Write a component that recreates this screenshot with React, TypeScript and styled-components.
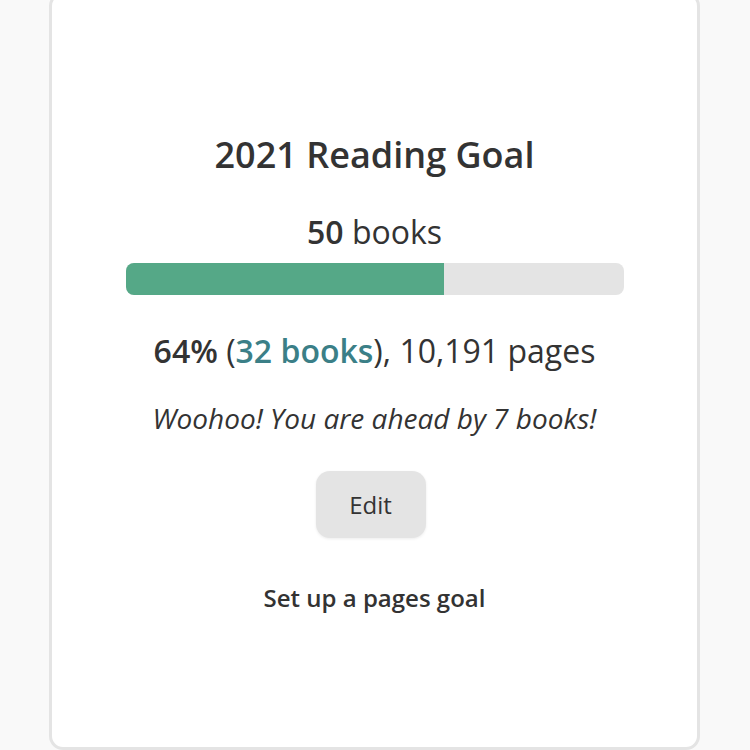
import React from 'react'
import styled, { createGlobalStyle } from 'styled-components'

const GlobalStyle = createGlobalStyle`
  html, body {
    margin: 0;
    padding: 0;
    background: #f9f9f9;
    font-family: "Open Sans", "Noto Sans", sans-serif;
    color: #333;
  }
`

const Page = styled.div`
  width: 750px;
  height: 750px;
  overflow: hidden;
  display: flex;
  justify-content: center;
`

const Card = styled.section`
  box-sizing: border-box;
  width: 651px;
  height: 758px;
  margin: -8px 0 0 -1px;
  background: #fff;
  border: 3px solid #e4e4e4;
  border-radius: 14px;
  display: flex;
  flex-direction: column;
  align-items: center;
  padding-top: 139px;
`

const Title = styled.h2`
  margin: 0;
  font-size: 36px;
  font-weight: 600;
  line-height: 42px;
  color: #333;
`

const Target = styled.div`
  margin-top: 36px;
  font-size: 32px;
  line-height: 40px;
  b { font-weight: 600; }
`

const Bar = styled.div`
  margin-top: 11px;
  width: 498px;
  height: 32px;
  border-radius: 8px;
  background: #e4e4e4;
  overflow: hidden;
  display: flex;
`

const Fill = styled.div`
  height: 100%;
  background: #55a887;
`

const Stats = styled.div`
  margin-top: 37px;
  font-size: 32px;
  line-height: 38px;
  b { font-weight: 600; }
`

const BookLink = styled.a`
  color: #3b7f87;
  font-weight: 600;
  text-decoration: none;
`

const Cheer = styled.p`
  margin: 30px 0 0;
  font-size: 28px;
  line-height: 36px;
  font-style: italic;
`

const EditButton = styled.button`
  margin: 35px 8px 0 0;
  width: 110px;
  height: 67px;
  border: none;
  border-radius: 14px;
  background: #e4e4e4;
  box-shadow: 0 1px 3px rgba(0, 0, 0, 0.08);
  font-family: inherit;
  font-size: 24px;
  color: #333;
`

const PagesGoal = styled.a`
  margin-top: 45px;
  font-size: 24px;
  font-weight: 600;
  line-height: 30px;
  color: #333;
  text-decoration: none;
`

const App: React.FC = () => {
  const percent = 64
  return (
    <Page>
      <GlobalStyle />
      <Card>
        <Title>2021 Reading Goal</Title>
        <Target><b>50</b> books</Target>
        <Bar>
          <Fill style={{ width: `${percent}%` }} />
        </Bar>
        <Stats>
          <b>{percent}%</b> (<BookLink href="#">32 books</BookLink>), 10,191 pages
        </Stats>
        <Cheer>Woohoo! You are ahead by 7 books!</Cheer>
        <EditButton>Edit</EditButton>
        <PagesGoal href="#">Set up a pages goal</PagesGoal>
      </Card>
    </Page>
  )
}

export default App
